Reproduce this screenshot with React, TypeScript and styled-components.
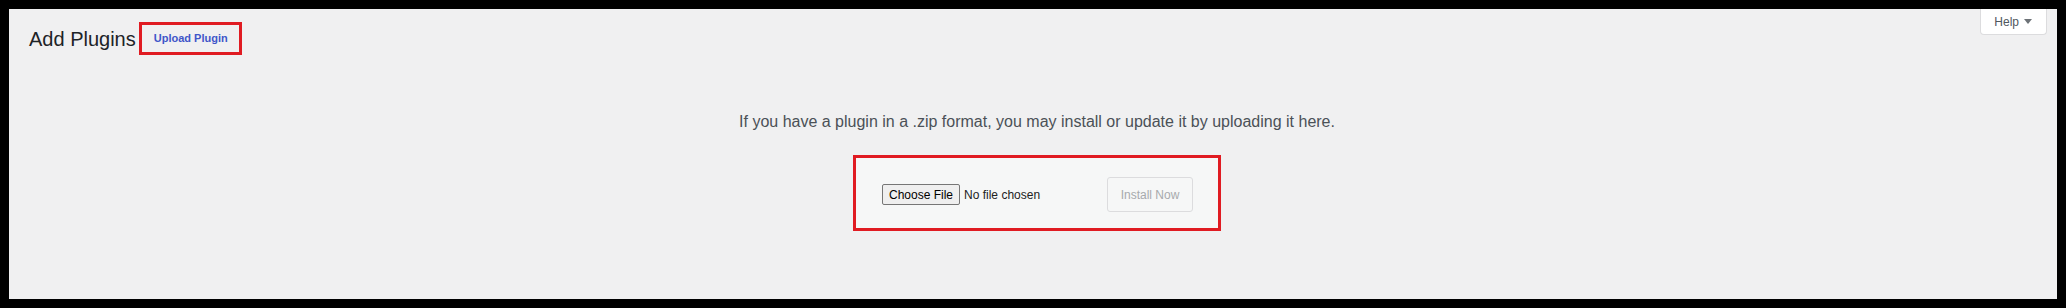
import React from 'react';
import styled, { createGlobalStyle } from 'styled-components';

const GlobalStyle = createGlobalStyle`
  html, body {
    margin: 0;
    padding: 0;
    background: #fff;
  }
  body {
    font-family: "Liberation Sans", Arial, sans-serif;
  }
`;

const Frame = styled.div`
  box-sizing: border-box;
  width: 2066px;
  height: 308px;
  border: 9px solid #000;
  background: #f0f0f1;
  display: flex;
  flex-direction: column;
`;

const TopBar = styled.div`
  display: flex;
  justify-content: space-between;
  align-items: flex-start;
  padding: 0 10px 0 20px;
`;

const TitleGroup = styled.div`
  display: flex;
  align-items: center;
  margin-top: 13px;
`;

const Title = styled.h1`
  margin: 0 3px 0 0;
  font-size: 20px;
  font-weight: 400;
  line-height: 1;
  color: #1d2327;
`;

const Highlight = styled.div`
  border: 3px solid #e01b22;
  display: flex;
  align-items: center;
`;

const ActionLink = styled.a`
  display: block;
  padding: 0 11px 0 12px;
  line-height: 27px;
  font-size: 11px;
  font-weight: 700;
  color: #3f56c9;
  text-decoration: none;
`;

const HelpTab = styled.button`
  display: flex;
  align-items: center;
  gap: 5px;
  height: 26px;
  padding: 0 14px 0 13px;
  background: #fff;
  border: 1px solid #dcdcde;
  border-top: none;
  border-radius: 0 0 4px 4px;
  font-family: "Liberation Sans", Arial, sans-serif;
  font-size: 12px;
  color: #50575e;
`;

const Section = styled.div`
  padding: 0 20px 0 28px;
  text-align: center;
`;

const Help = styled.p`
  margin: 56px 0 0;
  font-size: 16px;
  line-height: 22px;
  color: #4b5157;
`;

const UploadForm = styled.form`
  display: inline-flex;
  align-items: center;
  margin-top: 22px;
  padding: 19px 25px 16px 26px;
  background: #f6f7f7;
  border: 3px solid #e01b22;
`;

const FileField = styled.div`
  width: 225px;
  display: flex;
  align-items: center;
  gap: 4px;
`;

const ChooseButton = styled.span`
  box-sizing: border-box;
  height: 21px;
  display: flex;
  align-items: center;
  padding: 0 6px;
  background: #efefef;
  border: 1px solid #767676;
  border-radius: 2px;
  font-size: 12px;
  color: #000;
`;

const FileName = styled.span`
  font-size: 12px;
  color: #222;
`;

const InstallButton = styled.button`
  box-sizing: border-box;
  width: 86px;
  height: 35px;
  padding: 0;
  background: #f6f7f7;
  border: 1px solid #dcdcde;
  border-radius: 3px;
  font-family: "Liberation Sans", Arial, sans-serif;
  font-size: 12px;
  color: #a7aaad;
`;

const Caret = () => (
  <svg width="8" height="5" viewBox="0 0 8 5">
    <path d="M0 0h8L4 5z" fill="#6d7277" />
  </svg>
);

export default function App() {
  return (
    <>
      <GlobalStyle />
      <Frame>
        <TopBar>
          <TitleGroup>
            <Title>Add Plugins</Title>
            <Highlight>
              <ActionLink href="#">Upload Plugin</ActionLink>
            </Highlight>
          </TitleGroup>
          <HelpTab type="button">
            Help <Caret />
          </HelpTab>
        </TopBar>
        <Section>
          <Help>
            If you have a plugin in a .zip format, you may install or update it by uploading it here.
          </Help>
          <UploadForm onSubmit={(e) => e.preventDefault()}>
            <FileField>
              <ChooseButton>Choose File</ChooseButton>
              <FileName>No file chosen</FileName>
            </FileField>
            <InstallButton type="submit" disabled>
              Install Now
            </InstallButton>
          </UploadForm>
        </Section>
      </Frame>
    </>
  );
}
